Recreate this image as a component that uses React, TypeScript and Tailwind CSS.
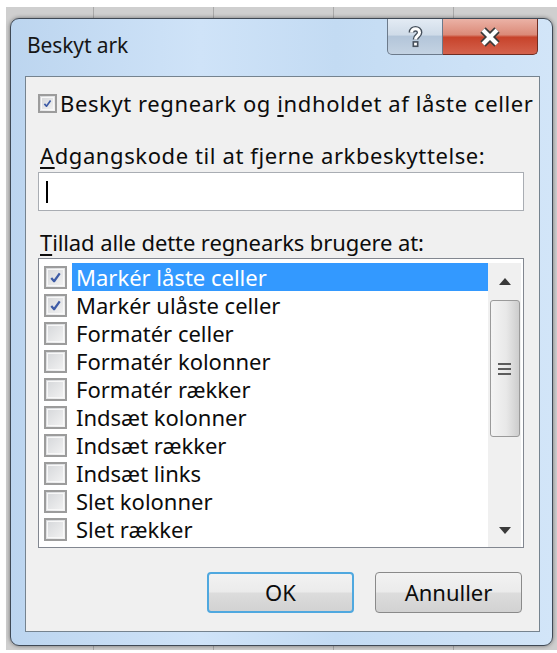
import React from 'react';

type Item = { label: string; checked?: boolean; selected?: boolean };

const items: Item[] = [
  { label: 'Markér låste celler', checked: true, selected: true },
  { label: 'Markér ulåste celler', checked: true },
  { label: 'Formatér celler' },
  { label: 'Formatér kolonner' },
  { label: 'Formatér rækker' },
  { label: 'Indsæt kolonner' },
  { label: 'Indsæt rækker' },
  { label: 'Indsæt links' },
  { label: 'Slet kolonner' },
  { label: 'Slet rækker' },
];

const CheckBox: React.FC<{ checked?: boolean; big?: boolean }> = ({ checked, big }) => (
  <div
    className={`${big ? 'w-[23px] h-[23px]' : 'w-[19px] h-[19px]'} shrink-0 border-2 border-[#9c9c9c] bg-[linear-gradient(135deg,#d4d6d9,#f4f4f4)] p-[1px]`}
  >
    <div className="w-full h-full border border-[#f8f8f8] flex items-center justify-center">
      {checked && (
        <svg viewBox="0 0 16 16" className="w-full h-full">
          <path d="M3.5 8.5 L6.5 12 L12.5 3.5" fill="none" stroke="#3d5ba6" strokeWidth="2.4" strokeLinejoin="round" />
        </svg>
      )}
    </div>
  </div>
);

const HelpGlyph = () => (
  <svg viewBox="0 0 14 20" className="w-[17px] h-[23px]">
    <path d="M3.5 6.5 C3.5 2.2 10.5 2.2 10.5 6.5 C10.5 9.5 7 9.5 7 12.5" fill="none" stroke="#46505c" strokeWidth="5" />
    <rect x="4.4" y="14" width="5.2" height="5.2" fill="#46505c" />
    <path d="M3.5 6.5 C3.5 2.2 10.5 2.2 10.5 6.5 C10.5 9.5 7 9.5 7 12.5" fill="none" stroke="#ffffff" strokeWidth="2.6" />
    <rect x="5.8" y="15.4" width="2.4" height="2.4" fill="#ffffff" />
  </svg>
);

const CloseGlyph = () => (
  <svg viewBox="0 0 22 20" className="w-[22px] h-[20px]">
    <path d="M4 3 L18 17 M18 3 L4 17" stroke="#3b3b3b" strokeWidth="7.5" />
    <path d="M4 3 L18 17 M18 3 L4 17" stroke="#ffffff" strokeWidth="4.2" />
  </svg>
);

const Scrollbar = () => (
  <div className="w-[33px] mr-[2px] bg-[#f0f0f0] flex flex-col items-center">
    <div className="h-[37px] w-full flex items-center justify-center">
      <svg viewBox="0 0 12 7" className="w-[12px] h-[7px]">
        <path d="M0 7 L6 0 L12 7 Z" fill="#3a3a3a" />
      </svg>
    </div>
    <div className="h-[137px] w-[30px] rounded-[3px] border border-[#9a9a9a] bg-[linear-gradient(90deg,#f4f4f4,#e8e8e8_55%,#cdcdcd)] flex flex-col items-center justify-center gap-[3px]">
      <div className="w-[13px] h-[2px] bg-[#5c5c5c]" />
      <div className="w-[13px] h-[2px] bg-[#5c5c5c]" />
      <div className="w-[13px] h-[2px] bg-[#5c5c5c]" />
    </div>
    <div className="flex-1" />
    <div className="h-[33px] w-full flex items-center justify-center">
      <svg viewBox="0 0 12 7" className="w-[12px] h-[7px]">
        <path d="M0 0 L6 7 L12 0 Z" fill="#3a3a3a" />
      </svg>
    </div>
  </div>
);

const App: React.FC = () => {
  return (
    <div
      className="w-[557px] h-[653px] bg-white overflow-hidden text-[#0c0c0c]"
      style={{ fontFamily: '"Noto Sans", "Open Sans", sans-serif' }}
    >
      {/* spreadsheet behind the dialog */}
      <div className="ml-[6px] mt-[7px] h-[643px] pl-[4px] pt-[11px] bg-[#cfcfcf] bg-[linear-gradient(90deg,#a9a9a9_1px,transparent_1px)] bg-[length:120px_100%] bg-[position:87px_0]">
        <div className="w-[543px] h-[628px] rounded-[9px] border border-[#3f4955] bg-[linear-gradient(90deg,#bcd5ef,#cfe3f8_35%,#c3dbf3_60%,#d2e5f8)] shadow-[0_0_4px_rgba(0,0,0,0.45)] flex flex-col overflow-hidden">
          {/* title bar */}
          <div className="h-[57px] flex items-start">
            <div className="pl-[16px] h-[54px] flex items-center text-[21px] tracking-[-0.1px] text-[#161616]">
              Beskyt ark
            </div>
            <div className="flex-1" />
            <div className="flex mr-[14px]">
              <div className="w-[56px] h-[36px] rounded-bl-[5px] border border-t-0 border-[#6c7a8b] bg-[linear-gradient(#e3ebf4,#cfdbe8_45%,#b3c5d9_50%,#c4d3e3)] flex items-center justify-center">
                <HelpGlyph />
              </div>
              <div className="w-[95px] h-[36px] rounded-br-[5px] border border-l-0 border-t-0 border-[#6f2d22] bg-[linear-gradient(#ebb2a6,#db8a78_45%,#c7432b_52%,#d4624d)] flex items-center justify-center">
                <CloseGlyph />
              </div>
            </div>
          </div>

          {/* dialog body */}
          <div className="ml-[14px] w-[515px] h-[556px] border border-[#75838f] bg-[#f0f0f0] flex flex-col pl-[12px] pr-[16px] text-[22px]">
            <div className="mt-[16px] h-[20px] flex items-center gap-[3px]">
              <CheckBox checked />
              <span className="tracking-[0.6px] whitespace-nowrap">
                Beskyt regneark og <span className="underline underline-offset-[3px]">i</span>ndholdet af låste celler
              </span>
            </div>

            <div className="mt-[30px] h-[24px] flex items-center pl-[2px] tracking-[0.6px] whitespace-nowrap">
              <span>
                <span className="underline underline-offset-[3px]">A</span>dgangskode til at fjerne arkbeskyttelse:
              </span>
            </div>

            <div className="mt-[5px] w-[486px] h-[39px] border border-[#a9adb3] bg-white flex items-center pl-[7px]">
              <div className="w-[2px] h-[22px] bg-black" />
            </div>

            <div className="mt-[19px] h-[24px] flex items-center pl-[2px] tracking-[-0.1px] whitespace-nowrap">
              <span>
                <span className="underline underline-offset-[3px]">T</span>illad alle dette regnearks brugere at:
              </span>
            </div>

            <div className="mt-[4px] w-[486px] h-[290px] border border-[#828790] bg-white flex pt-[4px] overflow-hidden">
              <div className="flex-1 flex flex-col pl-[5px]">
                {items.map((it) => (
                  <div key={it.label} className="h-[28px] shrink-0 flex items-center">
                    <CheckBox checked={it.checked} big />
                    <div
                      className={`ml-[5px] flex-1 h-[28px] flex items-center pl-[4px] whitespace-nowrap ${it.selected ? 'bg-[#3399ff] text-white' : ''}`}
                    >
                      {it.label}
                    </div>
                  </div>
                ))}
              </div>
              <Scrollbar />
            </div>

            <div className="mt-[24px] flex justify-end gap-[21px] pr-[1px]">
              <button className="w-[147px] h-[41px] rounded-[4px] border-2 border-[#4fa8df] bg-[linear-gradient(#f2f2f2,#ebebeb_48%,#dcdcdc_52%,#d2d2d2)] text-[22px] text-[#0c0c0c] flex items-center justify-center">
                OK
              </button>
              <button className="w-[147px] h-[41px] rounded-[4px] border border-[#8a8a8a] bg-[linear-gradient(#f2f2f2,#ebebeb_48%,#dcdcdc_52%,#d2d2d2)] text-[22px] text-[#0c0c0c] flex items-center justify-center">
                Annuller
              </button>
            </div>
          </div>
        </div>
      </div>
    </div>
  );
};

export default App;
